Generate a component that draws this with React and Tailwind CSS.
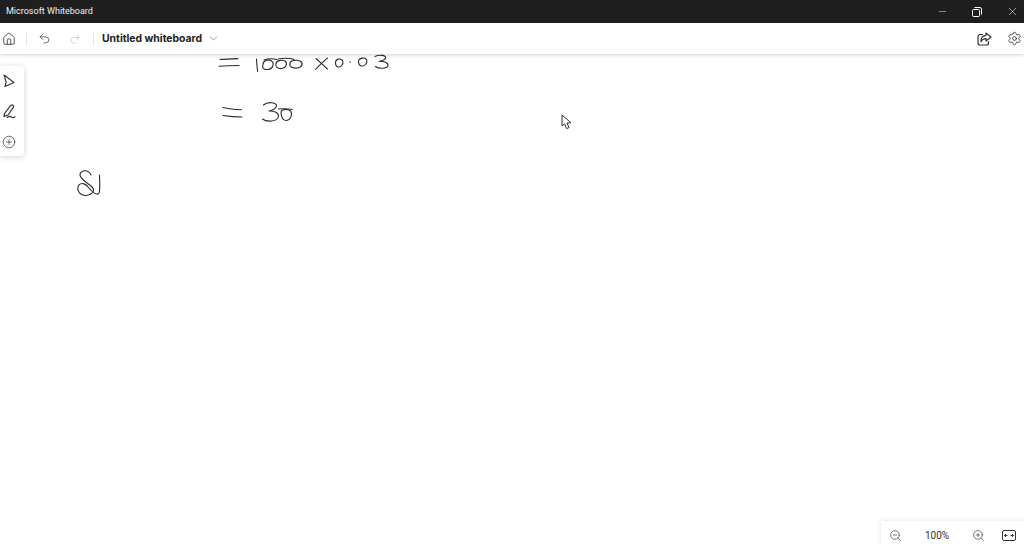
import React from "react";
import { ChevronDown, Home, Undo2, Redo2, Minus, X, Settings, ZoomIn, ZoomOut, CirclePlus } from "lucide-react";

// handwriting on the board, in canvas coordinates (canvas starts at y=54)
const strokes = [
  "M220 5.5 C226 5 232 4.8 238 4.6",
  "M219 12.2 C226 11.8 233 11.6 239 11.5",
  "M256.5 5 C256.6 9 257.2 13 257.6 17.5",
  "M263 10.5 C263 6.5 268 5 271 6.5 C275 9 273 15 268 15.5 C263 16 262 13.5 263 10.5 Z",
  "M264 6 C268 4.5 273 4.5 277 5.5",
  "M276 10 C276 6.5 282 5.5 285 7 C288 9.5 286 14 282 14.5 C278 15 275 13 276 10 Z",
  "M278 5 C284 4 290 4 294 5.5",
  "M290 9.5 C290 6.5 296 5.5 300 7 C304 9.5 302 13.5 297 14 C292 14.5 289 12.5 290 9.5 Z",
  "M316 4.5 C320 8 323 11.5 327.5 15",
  "M327.5 4 C323 8 319 11.5 315.5 15.5",
  "M335.5 8.5 C335.5 5 341 3.5 342.8 7 C343.5 10.5 341 13.5 338 13 C336 12.6 335.5 10.5 335.5 8.5 Z",
  "M349.8 8 L350.6 8",
  "M358.5 7.5 C358.5 4 365 2.5 366.8 6 C367.5 9.5 364.5 12.5 361.5 12 C359.5 11.6 358.5 9.5 358.5 7.5 Z",
  "M375 2.5 C379 0.5 386.5 1 385.5 4 C384.5 6.5 381 7 379 7.2 C384 7.2 388.5 8.5 388 11.5 C387 15 378.5 15 375.5 12.5",
  "M223 53.5 C229 55 235 55.5 241.5 55.8",
  "M223 61.5 C229 62.5 236 63 242 63",
  "M263.5 51 C267 47.5 277 48 276.5 52 C276 55 271 56.5 269 57 C274 56.5 279 59 278.5 62.5 C277.5 67.5 267 68.5 262.5 65",
  "M281 58 C281.5 55 288 54.5 290.5 57 C293 60.5 290.5 66 286.5 66.5 C282.5 67 281 62 281 58",
  "M278.5 55 C283 54.5 288 54.8 292 55.5",
  "M91 121 C89 116 82 115 80 120 C79 125 88 129 92 133 C96 137 91 142 85 141.5 C79 141 76 135 79 131 C82 128 86 130 89 134 C92 138 97 142 99 139 C100.5 135 99.5 127 99.5 121",
];

const Cursor = () => (
  <svg width="12" height="16" viewBox="0 0 12 16" fill="white" stroke="#333" strokeWidth="1" strokeLinejoin="round">
    <path d="M1 1 L1 12 L3.6 9.8 L5.6 14.6 L8 13.6 L6 9 L10 8.8 Z" />
  </svg>
);

const Restore = () => (
  <svg width="10" height="10" viewBox="0 0 10 10" fill="none" stroke="white" strokeWidth="1">
    <rect x="0.5" y="2.5" width="7" height="7" rx="1" />
    <path d="M2.5 0.5 H8 A1.5 1.5 0 0 1 9.5 2 V7.5" />
  </svg>
);

const Pointer = () => (
  <svg width="12" height="14" viewBox="0 0 12 14" fill="none" stroke="#333" strokeWidth="1.1" strokeLinejoin="round">
    <path d="M1 1 L11 8.5 L2 12.5 L3.2 8 Z" />
  </svg>
);

const Pen = () => (
  <svg width="14" height="15" viewBox="0 0 14 15" fill="none" stroke="#333" strokeWidth="1.2" strokeLinejoin="round" strokeLinecap="round">
    <path d="M2.5 9.5 L8.6 1.6 A1.6 1.6 0 0 1 11.2 3.6 L6 11 L2 12.5 Z" />
    <path d="M5 13.5 C7 12 8.5 12 9.5 13 C10.5 13.8 11.5 13.8 13 13" />
  </svg>
);

const ShareBox = () => (
  <svg width="15" height="14" viewBox="0 0 15 14" fill="none" stroke="#333" strokeWidth="1.2" strokeLinejoin="round" strokeLinecap="round">
    <path d="M5.5 2.5 H3 A2 2 0 0 0 1 4.5 V11 A2 2 0 0 0 3 13 H9.5 A2 2 0 0 0 11.5 11 V9.5" />
    <path d="M9 1 L14 5 L9 9 V6.6 C6.5 6.6 5 7.6 4 9.8 C4 6 5.8 3.4 9 3.3 Z" />
  </svg>
);

const FitWidth = () => (
  <svg width="14" height="11" viewBox="0 0 14 11" fill="none" stroke="#333" strokeWidth="1">
    <rect x="0.5" y="0.5" width="13" height="10" rx="1.5" />
    <path d="M2.5 5.5 H5.5 M4 4 L2.5 5.5 L4 7 M11.5 5.5 H8.5 M10 4 L11.5 5.5 L10 7" />
  </svg>
);

export default function App() {
  return (
    <div className="flex flex-col h-[544px] w-[1024px] overflow-hidden bg-white font-['Roboto','Liberation_Sans',sans-serif]">
      <div className="h-[23px] shrink-0 bg-[#1f1f1f] flex items-center text-white">
        <span className="pl-[6px] pt-[1px] text-[9px] text-[#f0f0f0]">Microsoft Whiteboard</span>
        <div className="ml-auto flex items-center">
          <div className="w-[24px] flex justify-center"><Minus size={11} strokeWidth={1.2} color="#ddd" /></div>
          <div className="w-[46px] flex justify-center"><Restore /></div>
          <div className="w-[24px] flex justify-center"><X size={13} strokeWidth={1.1} color="#eee" /></div>
        </div>
      </div>

      <div className="h-[31px] shrink-0 bg-white flex items-center relative z-20 shadow-[0_1px_4px_rgba(0,0,0,0.18)] text-[#333]">
        <div className="w-[18px] flex justify-center"><Home size={14} strokeWidth={1.4} /></div>
        <div className="w-px h-[14px] bg-[#e8e8e8] ml-[8px]" />
        <div className="ml-[10px] w-[15px] flex justify-center"><Undo2 size={13} strokeWidth={1.4} color="#444" /></div>
        <div className="ml-[15px] w-[15px] flex justify-center"><Redo2 size={12} strokeWidth={1.2} color="#bbb" /></div>
        <div className="w-px h-[14px] bg-[#e8e8e8] ml-[11px]" />
        <span className="ml-[8px] text-[10.4px] font-bold text-[#222] font-['Inter','Liberation_Sans',sans-serif]">Untitled whiteboard</span>
        <ChevronDown size={13} strokeWidth={1.1} color="#555" className="ml-[5px]" />
        <div className="ml-auto flex items-center gap-[15px] pr-[2px]">
          <ShareBox />
          <Settings size={15} strokeWidth={1.3} color="#333" />
        </div>
      </div>

      <div className="relative flex-1">
        <svg className="absolute inset-0" width="1024" height="490" viewBox="0 0 1024 490" fill="none" stroke="#2b2b2b" strokeWidth="1.1" strokeLinecap="round" strokeLinejoin="round">
          {strokes.map((d, i) => (
            <path key={i} d={d} />
          ))}
        </svg>

        <div className="absolute left-0 top-[12px] w-[24px] h-[90px] bg-white rounded-r-[4px] shadow-[0_1px_6px_rgba(0,0,0,0.18)] flex flex-col items-center gap-[16px] pt-[8px]">
          <div className="-translate-x-[3px]"><Pointer /></div>
          <div className="-translate-x-[3px]"><Pen /></div>
          <div className="-translate-x-[3px]"><CirclePlus size={14} strokeWidth={1.2} color="#333" /></div>
        </div>

        <div className="absolute left-[561px] top-[60px]"><Cursor /></div>

        <div className="absolute right-0 bottom-0 w-[143px] h-[23px] pt-[6px] bg-white shadow-[0_0_5px_rgba(0,0,0,0.12)] flex items-center text-[#333]">
          <ZoomOut size={13} strokeWidth={1.2} className="ml-[8px]" />
          <span className="ml-[21px] w-[28px] text-center text-[10px]">100%</span>
          <ZoomIn size={13} strokeWidth={1.2} className="ml-[21px]" />
          <div className="ml-[17px]"><FitWidth /></div>
        </div>
      </div>
    </div>
  );
}
